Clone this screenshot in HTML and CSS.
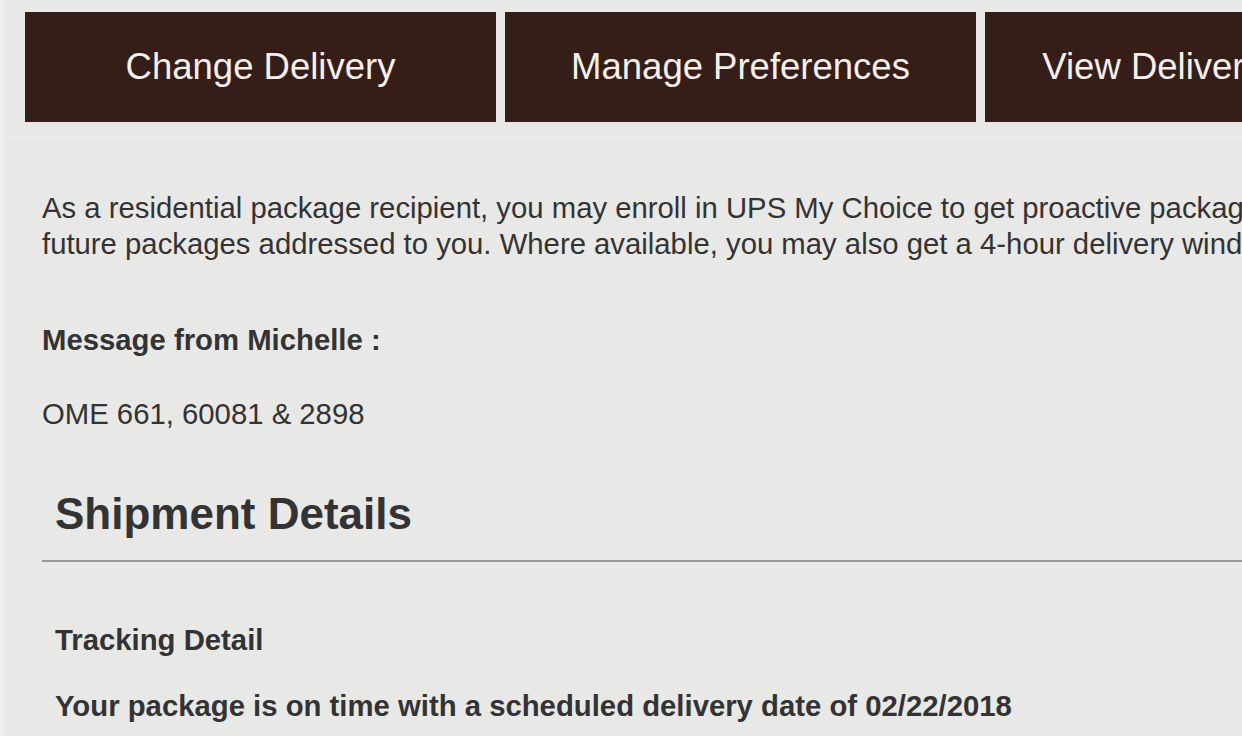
FILE: index.html
```html
<!DOCTYPE html>
<html lang="en">
<head>
<meta charset="utf-8">
<title>UPS Tracking</title>
<link rel="stylesheet" href="styles.css">
</head>
<body>
<div class="page">
  <nav class="actions">
    <a class="action" href="#">Change Delivery</a>
    <a class="action" href="#">Manage Preferences</a>
    <a class="action" href="#">View Delivery Planner</a>
  </nav>
  <main class="content">
    <p class="intro">As a residential package recipient, you may enroll in UPS My Choice to get proactive package alerts and more control over<br>future packages addressed to you. Where available, you may also get a 4-hour delivery window.</p>
    <p class="msg-label">Message from Michelle :</p>
    <p class="msg-text">OME 661, 60081 &amp; 2898</p>
    <section class="shipment">
      <h2 class="shipment-title">Shipment Details</h2>
      <hr class="rule">
      <h3 class="tracking-title">Tracking Detail</h3>
      <p class="status">Your package is on time with a scheduled delivery date of 02/22/2018</p>
    </section>
  </main>
</div>
</body>
</html>
```

FILE: styles.css
```css
html, body {
  margin: 0;
  padding: 0;
}
body {
  background: #eeeeec;
  font-family: "Liberation Sans", Arial, Helvetica, sans-serif;
  color: #333333;
  overflow: hidden;
}
.page {
  margin-left: 4px;
  background: #e8e8e6;
  min-height: 736px;
  width: 1400px;
}
.actions {
  display: flex;
  gap: 9px;
  padding: 12px 0 15px 21px;
  border-bottom: 1px solid #efefed;
}
.action {
  flex: 0 0 471px;
  height: 110px;
  display: flex;
  align-items: center;
  justify-content: center;
  background: #351e18;
  color: #f6f0ec;
  font-size: 36.5px;
  text-decoration: none;
  white-space: nowrap;
  overflow: hidden;
}
.content {
  padding: 52px 0 0 38px;
}
.intro {
  margin: 0;
  font-size: 29.3px;
  line-height: 36px;
  white-space: nowrap;
}
.msg-label {
  margin: 60px 0 0;
  font-size: 29.3px;
  line-height: 36px;
  font-weight: bold;
}
.msg-text {
  margin: 38px 0 0;
  font-size: 29.3px;
  line-height: 36px;
}
.shipment {
  margin-top: 56px;
}
.shipment-title {
  margin: 0 0 0 13px;
  font-size: 44px;
  line-height: 52px;
  font-weight: bold;
}
.rule {
  margin: 20px 0 0;
  border: 0;
  height: 2px;
  background: #999999;
}
.tracking-title {
  margin: 60px 0 0 13px;
  font-size: 29.3px;
  line-height: 36px;
  font-weight: bold;
}
.status {
  margin: 30px 0 0 13px;
  font-size: 29.3px;
  line-height: 36px;
  font-weight: bold;
  white-space: nowrap;
}
```
